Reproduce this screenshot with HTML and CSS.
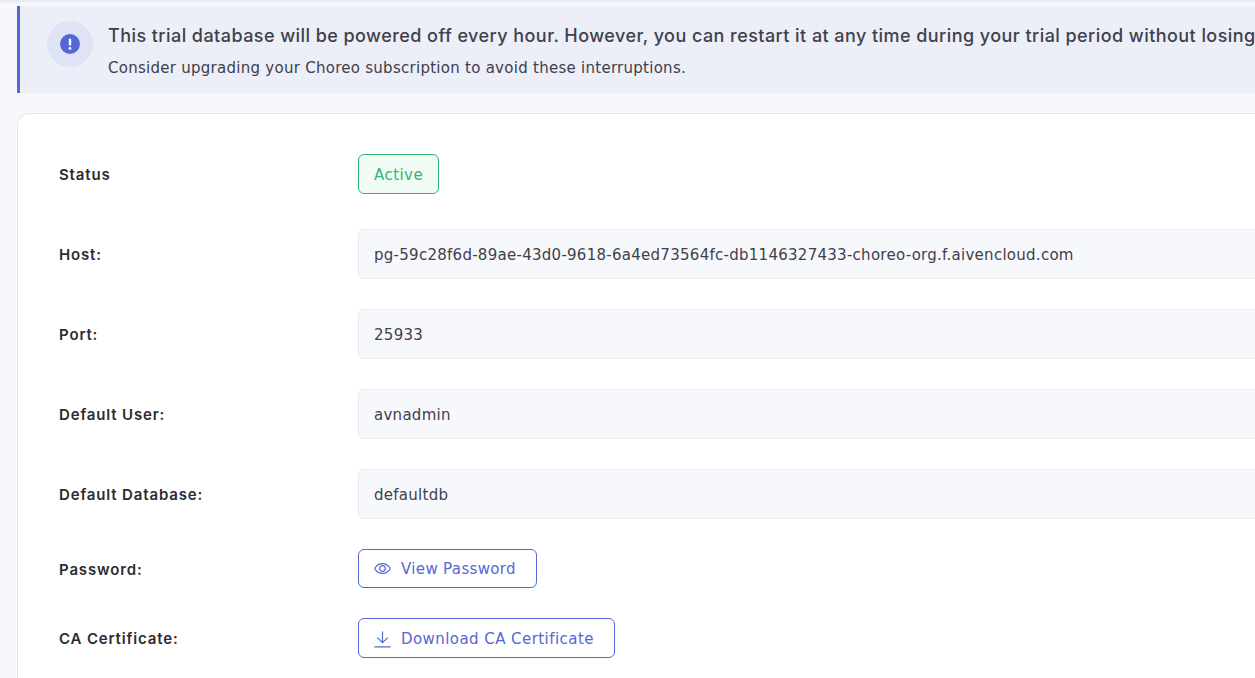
FILE: index.html
```html
<!DOCTYPE html>
<html lang="en">

<head>
    <meta charset="UTF-8">
    <meta name="viewport" content="width=device-width, initial-scale=1.0">
    <title>Database details</title>
    <link rel="stylesheet" href="styles.css">
</head>

<body>
    <div class="top-shadow"></div>
    <main class="page">
        <div class="notice">
            <div class="notice-icon">
                <svg width="20" height="20" viewBox="0 0 20 20">
                    <circle cx="10" cy="10" r="10" fill="#5567d5" />
                    <rect x="8.8" y="4.6" width="2.4" height="7" rx="1.2" fill="#fff" />
                    <circle cx="10" cy="14.4" r="1.4" fill="#fff" />
                </svg>
            </div>
            <div class="notice-text">
                <p class="notice-title">This trial database will be powered off every hour. However, you can restart it at any time during your trial period without losing</p>
                <p class="notice-sub">Consider upgrading your Choreo subscription to avoid these interruptions.</p>
            </div>
        </div>

        <section class="card">
            <div class="row row-status">
                <div class="label">Status</div>
                <span class="badge">Active</span>
            </div>
            <div class="row">
                <div class="label">Host:</div>
                <div class="field">pg-59c28f6d-89ae-43d0-9618-6a4ed73564fc-db1146327433-choreo-org.f.aivencloud.com</div>
            </div>
            <div class="row">
                <div class="label">Port:</div>
                <div class="field">25933</div>
            </div>
            <div class="row">
                <div class="label">Default User:</div>
                <div class="field">avnadmin</div>
            </div>
            <div class="row">
                <div class="label">Default Database:</div>
                <div class="field">defaultdb</div>
            </div>
            <div class="row row-password">
                <div class="label">Password:</div>
                <button class="btn btn-view">
                    <svg width="17" height="17" viewBox="0 0 17 17" fill="none" stroke="#5567d5" stroke-width="1.2">
                        <path d="M0.7 8.5C2.5 5.2 5.3 3.6 8.5 3.6S14.5 5.2 16.3 8.5C14.5 11.8 11.7 13.4 8.5 13.4S2.5 11.8 0.7 8.5Z" />
                        <circle cx="8.5" cy="8.5" r="2.8" />
                    </svg>
                    View Password
                </button>
            </div>
            <div class="row row-cert">
                <div class="label">CA Certificate:</div>
                <button class="btn btn-download">
                    <svg width="17" height="17" viewBox="0 0 17 17" fill="none" stroke="#5567d5" stroke-width="1.2" stroke-linecap="round" stroke-linejoin="round">
                        <path d="M8.5 0.8V11.5M3.6 6.8L8.5 11.7L13.4 6.8" />
                        <path d="M0.8 15.9H16.2" />
                    </svg>
                    Download CA Certificate
                </button>
            </div>
        </section>
    </main>
</body>

</html>
```

FILE: styles.css
```css
body {
    margin: 0;
    background-color: #f7f8fb;
    font-family: "DejaVu Sans", sans-serif;
    font-size: 15px;
    letter-spacing: 0.27px;
    color: #40404b;
    height: 100vh;
    overflow: hidden;
}

.top-shadow {
    height: 6px;
    background: linear-gradient(#e6e7ec, #f7f8fb 60%);
}

.page {
    width: 1500px;
    padding-left: 17px;
}

.notice {
    display: flex;
    align-items: flex-start;
    gap: 15px;
    height: 87px;
    box-sizing: border-box;
    padding: 15px 0 0 27px;
    background-color: #eceef8;
    border-left: 3px solid #5567d5;
}

.notice-icon {
    width: 46px;
    height: 46px;
    border-radius: 50%;
    background-color: #dfe3f6;
    display: flex;
    align-items: center;
    justify-content: center;
    flex-shrink: 0;
}

.notice-title {
    margin: 0;
    font-family: Inter, sans-serif;
    font-size: 18px;
    line-height: 30px;
    font-weight: 500;
    letter-spacing: 0.44px;
    white-space: nowrap;
}

.notice-sub {
    margin: 7px 0 0;
    line-height: 20px;
    white-space: nowrap;
}

.card {
    margin-top: 20px;
    background-color: #fff;
    border: 1px solid #e3e4ea;
    border-radius: 12px 0 0 0;
    padding: 40px 0 0 41px;
}

.row {
    display: flex;
    align-items: center;
    height: 50px;
    margin-bottom: 30px;
}

.row-status {
    height: 40px;
    margin-bottom: 35px;
}

.row-password {
    height: 39px;
}

.row-password .label {
    padding-top: 2px;
}

.row-cert {
    height: 40px;
    margin-bottom: 20px;
}

.label {
    width: 299px;
    flex-shrink: 0;
    font-family: Inter, sans-serif;
    font-weight: 600;
    letter-spacing: 0.85px;
    color: #2b2b33;
}

.badge {
    box-sizing: border-box;
    height: 40px;
    padding: 2px 15px 0;
    display: flex;
    align-items: center;
    letter-spacing: 0.45px;
    color: #36b475;
    background-color: #f0fbf5;
    border: 1px solid #36b475;
    border-radius: 6px;
}

.field {
    flex: 1;
    height: 50px;
    box-sizing: border-box;
    display: flex;
    align-items: center;
    padding: 2px 0 0 15px;
    background-color: #f7f8fb;
    border: 1px solid #e9eaf0;
    border-radius: 6px;
}

.btn {
    box-sizing: border-box;
    height: 100%;
    padding: 0 20px 0 15px;
    display: flex;
    align-items: center;
    gap: 10px;
    font-family: inherit;
    font-size: inherit;
    letter-spacing: inherit;
    color: #5567d5;
    background-color: #fff;
    border: 1px solid #5567d5;
    border-radius: 6px;
}

.btn-view {
    letter-spacing: 0.35px;
}

.btn-download {
    padding-top: 2px;
    letter-spacing: 0.44px;
}
```
